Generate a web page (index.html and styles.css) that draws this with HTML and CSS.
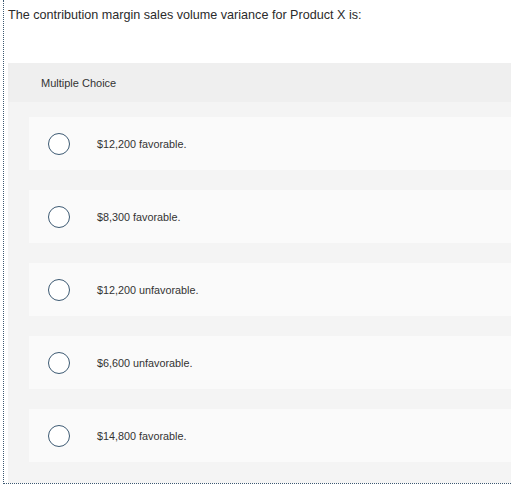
FILE: index.html
```html
<!DOCTYPE html>
<html>
<head>
<meta charset="utf-8">
<link rel="stylesheet" href="styles.css">
</head>
<body>
<div class="frame">
  <p class="question">The contribution margin sales volume variance for Product X is:</p>
  <div class="panel">
    <div class="panel-head">Multiple Choice</div>
    <div class="panel-body">
      <div class="option"><span class="radio"></span><span class="label">$12,200 favorable.</span></div>
      <div class="option"><span class="radio"></span><span class="label">$8,300 favorable.</span></div>
      <div class="option"><span class="radio"></span><span class="label">$12,200 unfavorable.</span></div>
      <div class="option"><span class="radio"></span><span class="label">$6,600 unfavorable.</span></div>
      <div class="option"><span class="radio"></span><span class="label">$14,800 favorable.</span></div>
    </div>
  </div>
</div>
</body>
</html>
```
FILE: styles.css
```css
html, body {
  margin: 0;
  padding: 0;
  background: #ffffff;
  overflow: hidden;
}
body {
  font-family: "Liberation Sans", Arial, sans-serif;
  color: #333333;
}
.frame {
  margin-left: 3px;
  width: 530px;
  height: 484px;
  box-sizing: border-box;
  border-left: 1px dotted #3c5870;
  border-bottom: 1px dotted #3c5870;
  padding-left: 4px;
  padding-top: 8px;
}
.question {
  margin: 0;
  font-size: 12.6px;
  line-height: 15px;
  color: #2b2b2b;
}
.panel {
  margin-top: 40px;
  background: #f4f4f4;
  height: 420px;
}
.panel-head {
  background: #efefef;
  height: 39px;
  box-sizing: border-box;
  padding-left: 33px;
  display: flex;
  align-items: center;
  font-size: 11px;
  color: #333333;
}
.panel-body {
  padding: 15px 0 0 21px;
  display: flex;
  flex-direction: column;
  gap: 20px;
}
.option {
  height: 53px;
  background: #fafafa;
  display: flex;
  align-items: center;
  padding-left: 19px;
}
.radio {
  width: 20px;
  height: 20px;
  border: 1.6px solid #3d5a73;
  border-radius: 50%;
  background: #ffffff;
  flex: none;
}
.label {
  margin-left: 27px;
  font-size: 10.8px;
  color: #333333;
}
```
